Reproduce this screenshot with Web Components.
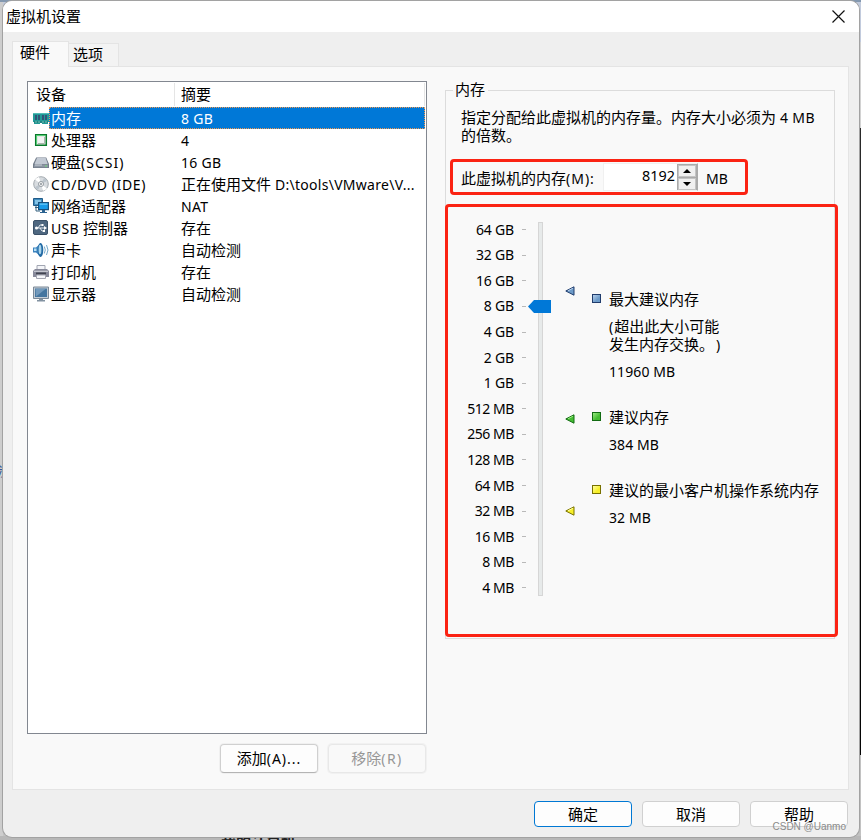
<!DOCTYPE html>
<html lang="zh-CN">
<head>
<meta charset="utf-8">
<title>虚拟机设置</title>
<style>
html,body{margin:0;height:100%;overflow:hidden}
body{font:15px/18px "Noto Sans CJK SC",sans-serif;color:#000;background:#c4c4c4;text-spacing-trim:space-all}
</style>
</head>
<body>
<vm-desktop><vm-window></vm-window></vm-desktop>
<script>
const define=(name,html)=>customElements.define(name,class extends HTMLElement{
  connectedCallback(){
    if(this.shadowRoot)return;
    this.attachShadow({mode:'open'}).innerHTML=typeof html==='function'?html(this):html;
  }
});

// Text with Latin runs set slightly smaller than the Chinese ones.
define('ui-text',el=>{
  const ls=el.getAttribute('ls');
  const runs=el.getAttribute('value').split(/([\x20-\x7e]+)/).filter(Boolean)
    .map(r=>/^[\x20-\x7e]+$/.test(r)?`<span class="l">${r}</span>`:`<span>${r}</span>`).join('');
  return `<style>:host{display:block;white-space:pre;height:18px;line-height:18px}
  span{line-height:18px}.l{font-family:"Noto Sans",sans-serif;font-size:var(--latin,14px);letter-spacing:${ls||0}px;margin-left:var(--gap,0)}</style>${runs}`;
});

define('ui-button',`<style>
:host{display:flex;box-sizing:border-box;width:98px;height:var(--h,26px);align-items:center;justify-content:center;background:#fdfdfd;border:1px solid #d0d0d0;border-radius:4px}
:host([primary]){border-color:#0078d4}
:host([raised]){border-bottom-color:#b4b4b4;box-shadow:0 0 0 1px #f0f0f0}
:host([disabled]){color:#969696;border-color:#e8e8e8;background:#f9f9f9;box-shadow:0 0 0 1px #f1f1f1}
</style><slot></slot>`);

const icons={
memory:`<path d="M0 3h16v9h-1v2h-6v-1H7v1H1v-2H0z" fill="#239a97"/><path d="M0 3h16v1H0z" fill="#54bcb6"/><path d="M2 5h2v5H2zM5 5h2v5H5zM9 5h2v5H9zM12 5h2v5h-2z" fill="#315477"/><path d="M1 12h14" stroke="#1b7070"/><path d="M3 11v2M6 11v2M10 11v2M13 11v2" stroke="#79c6b7"/>`,
cpu:`<path d="M2.7 2.7h10.6v10.6H2.7z" fill="#e2e8e2" stroke="#087a2b" stroke-width="1.5"/><path d="M3.5 12.5v-9h9" fill="none" stroke="#55ce76"/><path d="M5 5h6v6H5z" fill="#f3f3f4"/><path d="M5 11.5h6.5V5" fill="none" stroke="#abb4ad"/>`,
disk:`<path d="M3.2 3.5h10L16 10v4H0v-4z" fill="#737d8b"/><path d="M4 4h8.7l2 6H1.5z" fill="#c3cad4"/><path d="M1 10.5h14v2.8H1z" fill="#8d97a4"/><path d="M2 11h7" stroke="#cdd3da"/><path d="M12 12h2" stroke="#70e079"/>`,
cd:`<circle cx="8" cy="8" r="7.3" fill="#d8dce0" stroke="#a3aaaf"/><path d="M8 8L2 3.5A7 7 0 0 1 6 1zM8 8l6 4.5a7 7 0 0 1-4 2.2z" fill="#fff"/><path d="M8 8l3-6a7 7 0 0 1 3 3zM8 8l-3 6a7 7 0 0 1-3-3z" fill="#bcc5cd"/><circle cx="8" cy="8" r="2.5" fill="#f6f6f6" stroke="#969da3"/><circle cx="8" cy="8" r="1" fill="#8a9299"/>`,
net:`<path d="M.5.5h9v7h-9z" fill="#408bbd" stroke="#205b88"/><path d="M2 2h6v4H2z" fill="#84c3e6"/><path d="M3 8v5h4M2 9.5h4" stroke="#34617f" fill="none"/><path d="M5.6 4.6h9.8v7H5.6z" fill="#189be9" stroke="#17517e" stroke-width="1.2"/><path d="M6.6 5.6h7.8v1.2H6.6z" fill="#67cafa"/><path d="M9 12h3v2h2v1H7v-1h2z" fill="#2b6290"/>`,
usb:`<rect x=".5" y=".5" width="14" height="14" rx="1.5" fill="#4e6780" stroke="#3b5168"/><path d="M2.5 8H12M5 8l2-3h2M7 8l2 3h2" fill="none" stroke="#e4eaf0"/><circle cx="3.5" cy="8" r="1.5" fill="#fff"/><path d="M11 6l3 2-3 2zM8.5 4h2v2h-2zM10 10h2v2h-2z" fill="#fff"/>`,
sound:`<path d="M0 5.5h3L8 1v14l-5-4.5H0z" fill="#3b82bd"/><path d="M1 6.5h2.5V9H1z" fill="#b8dff4"/><ellipse cx="7.5" cy="8" rx="2.8" ry="7" fill="#236ba5"/><ellipse cx="7" cy="7.5" rx="1.4" ry="4.8" fill="#a8d4ec"/><path d="M11.3 4.5q2 3.5 0 7M13.5 3q3 5 0 10" fill="none" stroke="#74a7c8"/>`,
printer:`<path d="M4 1.5h8V6H4z" fill="#f4f5f8" stroke="#a2a6b2"/><path d="M2 5h12l2 2v6H0V7z" fill="#888a9b"/><path d="M1 6.7h14V8H1z" fill="#c5c7d0"/><path d="M3 8.5h10v2H3z" fill="#414451"/><path d="M3.5 11h9v3.5h-9z" fill="#f5f6fa" stroke="#a4a6b1"/>`,
display:`<path d="M.5 1h15v11.5H.5z" fill="#c4cdd6" stroke="#7b8997"/><path d="M2 2.5h12V11H2z" fill="#44759f"/><path d="M2.5 3h10L3 10.5z" fill="#7299bb"/><path d="M6 13h4v1h2v1.5H4V14h2z" fill="#8292a1"/>`
};
define('device-icon',el=>`<style>:host{display:block;width:16px;height:16px}svg{display:block}</style><svg width="16" height="16" viewBox="0 0 16 16">${icons[el.getAttribute('name')]}</svg>`);

define('device-row',el=>`<style>
:host{display:grid;grid-template-columns:16px 132px 1fr;height:22px;padding-left:5px;margin-right:1px;align-items:center}
.body{display:grid;grid-template-columns:130px 1fr;grid-column:2/4;height:22px;box-sizing:border-box;border:1px solid transparent;align-items:center;padding-left:1px}
:host([selected]) .body{background:#0078d7;color:#fff;border:1px dotted #f09850}
</style><device-icon name="${el.getAttribute('icon')}"></device-icon><div class="body"><ui-text value="${el.getAttribute('label')}" ls="${el.getAttribute('ls1')}"></ui-text><ui-text value="${el.getAttribute('summary')}" ls="${el.getAttribute('ls2')}"></ui-text></div>`);

const devices=[['memory','内存','8 GB',0,.3],['cpu','处理器','4',0,0],['disk','硬盘(SCSI)','16 GB',1,.3],['cd','CD/DVD (IDE)','正在使用文件 D:\\tools\\VMware\\V...',.6,.28],['net','网络适配器','NAT',0,.3],['usb','USB 控制器','存在',.3,0],['sound','声卡','自动检测',0,0],['printer','打印机','存在',0,0],['display','显示器','自动检测',0,0]];
define('device-list',`<style>
:host{display:block;box-sizing:border-box;width:400px;height:653px;background:#fff;border:1px solid #828790}
.head{display:grid;grid-template-columns:147px 1fr;height:25px;align-items:center;margin-right:1px}
.head div{height:23px;border-right:1px solid #e5e5e5;padding:2px 0 0 8px;box-sizing:border-box}
.head div:last-child{padding-left:6px}
</style><div class="head"><div><ui-text value="设备"></ui-text></div><div><ui-text value="摘要"></ui-text></div></div>
${devices.map((d,i)=>`<device-row ${i?'':'selected'} icon="${d[0]}" label="${d[1]}" summary="${d[2]}" ls1="${d[3]}" ls2="${d[4]}"></device-row>`).join('')}`);

define('memory-spinner',`<style>
:host{display:flex;height:28px;align-items:center}
.label{width:142px;padding-top:1px}
.field{display:flex;width:95px;height:28px;background:#fff;box-sizing:border-box;border:1px solid #f0f0f0;border-right-color:#aaa}
.field ui-text{flex:1;text-align:right;padding:2px 2px 0 0;--latin:14.4px}
.btns{width:20px;display:grid;grid-template-rows:1fr 1fr;gap:1px;background:#aaa;padding:1px 1px 0 1px;box-sizing:border-box}
.btns b{display:flex;align-items:center;justify-content:center;background:#f0f0f0;border:1px solid #c4c4c4}
.unit{margin-left:8px;padding-top:1px}
</style><ui-text class="label" value="此虚拟机的内存(M):" ls="1"></ui-text><div class="field"><ui-text value="8192"></ui-text><div class="btns"><b><svg width="8" height="4"><path d="M0 4L4 0l4 4z"/></svg></b><b><svg width="8" height="4"><path d="M0 0h8L4 4z"/></svg></b></div></div><ui-text class="unit" value="MB"></ui-text>`);

const levels=['64 GB','32 GB','16 GB','8 GB','4 GB','2 GB','1 GB','512 MB','256 MB','128 MB','64 MB','32 MB','16 MB','8 MB','4 MB'];
const tones={blue:['#6d9bc9','#b8d0ea','#203c6c'],green:['#45bd33','#9bea83','#126b12'],yellow:['#f7ef28','#ffffa5','#777000']};
define('level-arrow',el=>{const [a,b,c]=tones[el.getAttribute('tone')];return `<style>:host{display:block;width:10px;height:10px}svg{display:block}</style><svg width="10" height="10"><path d="M.8 5L9 .8v8.4z" fill="${a}" stroke="${c}"/><path d="M3 4.8L8 2.2" stroke="${b}"/></svg>`});
define('level-swatch',el=>{const [a,b,c]=tones[el.getAttribute('tone')];return `<style>:host{display:block;box-sizing:border-box;width:9px;height:9px;border:1px solid ${c};background:linear-gradient(135deg,${b},${a} 65%)}</style>`});
define('memory-slider',`<style>
:host{display:grid;grid-template-columns:68px 12px 27px;height:384px}
.labels,.ticks{display:grid;grid-template-rows:repeat(15,1fr);height:383.6px;align-items:center}
.labels{text-align:right;margin-top:-1px}.ticks{justify-content:end}
.ticks i{width:4px;height:1px;background:#b9b9b9}
.rail{position:relative}
.track{box-sizing:border-box;width:5px;height:374px;margin:5px 0 0 12px;background:#e7eaea;border:1px solid #d6d6d6}
.thumb{position:absolute;left:2px;top:83px;width:23px;height:13px;background:#0078d7;clip-path:polygon(0 50%,6px 0,100% 0,100% 100%,6px 100%)}
</style><div class="labels">${levels.map(t=>`<ui-text value="${t}" ls="${t.includes('M')?-.45:-.2}"></ui-text>`).join('')}</div><div class="ticks">${levels.map(()=>'<i></i>').join('')}</div><div class="rail"><div class="track"></div><div class="thumb"></div></div>`);

define('memory-legend',`<style>
:host{display:grid;grid-template-columns:27px 1fr}
.a1{margin-top:69px}.a2{margin-top:118px}.a3{margin-top:82px}
.items{padding-top:73px}
section{display:grid;grid-template-columns:17px 1fr}
section+section{margin-top:28px}
level-swatch{margin-top:4px}
.v{margin-top:9px}
.close{--gap:2px}
</style><div><level-arrow class="a1" tone="blue"></level-arrow><level-arrow class="a2" tone="green"></level-arrow><level-arrow class="a3" tone="yellow"></level-arrow></div>
<div class="items">
<section><level-swatch tone="blue"></level-swatch><div><ui-text value="最大建议内存"></ui-text><ui-text class="v" value="(超出此大小可能" ls="1"></ui-text><ui-text class="close" value="发生内存交换。)"></ui-text><ui-text class="v" value="11960 MB" ls="0.1"></ui-text></div></section>
<section><level-swatch tone="green"></level-swatch><div><ui-text value="建议内存"></ui-text><ui-text class="v" value="384 MB" ls="0.1"></ui-text></div></section>
<section><level-swatch tone="yellow"></level-swatch><div><ui-text value="建议的最小客户机操作系统内存"></ui-text><ui-text class="v" value="32 MB" ls="0.1"></ui-text></div></section>
</div>`);

define('memory-group',`<style>
:host{display:block;position:relative;box-sizing:border-box;width:390px;height:549px;border:1px solid #dcdcdc}
.title{width:max-content;margin:-11px 0 0 7px;padding:0 3px 0 2px;background:#f9f9f9}
.desc{margin:10px 0 0 15px}
memory-spinner{margin:19px 0 0 15px}
.levels{display:grid;grid-template-columns:107px 1fr;margin-top:26px}
.levels memory-legend{margin-left:12px}
.mark{position:absolute;box-sizing:border-box;border:3px solid #fb2313;border-radius:4px}
.m1{left:4px;top:68px;width:298px;height:36px}
.m2{left:-1px;top:113px;width:393px;height:433px}
</style><ui-text class="title" value="内存"></ui-text><div class="desc"><ui-text value="指定分配给此虚拟机的内存量。内存大小必须为 4 MB" ls="0.35"></ui-text><ui-text value="的倍数。"></ui-text></div><memory-spinner></memory-spinner>
<div class="levels"><memory-slider></memory-slider><memory-legend></memory-legend></div><div class="mark m1"></div><div class="mark m2"></div>`);

define('vm-window',`<style>
:host{display:flex;flex-direction:column;position:relative;box-sizing:border-box;width:856px;height:836px;background:#efefef;border-radius:9px;overflow:hidden;box-shadow:0 0 0 1px #a2a2a2}
header{display:flex;justify-content:space-between;height:31px;background:#fff;padding:0 14px 1px 3px;box-sizing:border-box;align-items:center}
header svg{display:block}
nav{display:flex;align-items:flex-end;height:34px;padding-left:9px}
.tab{box-sizing:border-box;border:1px solid #e4e4e4;border-bottom:0}
.on{width:57px;height:26px;background:#f9f9f9;padding:1px 0 0 7px;margin-bottom:-1px;position:relative}
.off{width:50px;height:23px;background:#f3f3f3;padding:1px 0 0 4px;border-left:0}
main{display:flex;gap:18px;box-sizing:border-box;width:837px;height:724px;margin-left:9px;background:#f9f9f9;border:1px solid #e4e4e4;padding:14px 0 0 14px}
memory-group{margin-top:9px}
.actions{display:flex;gap:10px;justify-content:flex-end;margin:10px 1px 0 0;--h:29px}
.actions ui-text{margin-top:-2px}
footer{display:flex;gap:10px;justify-content:flex-end;padding:11px 11px 0 0;position:relative}
.wm{position:absolute;right:13px;top:29px;font:10px/16px "Liberation Sans",sans-serif;color:#8b8b8b}
</style>
<header><ui-text value="虚拟机设置"></ui-text><svg width="13" height="13"><path d="M.5.5l12 12M12.5.5l-12 12" stroke="#111" stroke-width="1.2"/></svg></header>
<nav><div class="tab on"><ui-text value="硬件"></ui-text></div><div class="tab off"><ui-text value="选项"></ui-text></div></nav>
<main><div><device-list></device-list><div class="actions"><ui-button raised><ui-text value="添加(A)..." ls="1"></ui-text></ui-button><ui-button disabled><ui-text value="移除(R)" ls="1.4"></ui-text></ui-button></div></div><memory-group></memory-group></main>
<footer><ui-button primary><ui-text value="确定"></ui-text></ui-button><ui-button><ui-text value="取消"></ui-text></ui-button><ui-button><ui-text value="帮助"></ui-text></ui-button><span class="wm">CSDN @Uanmo</span></footer>`);

// Slivers of the desktop that stay visible round the dialog.
define('vm-desktop',`<style>
:host{display:block;position:relative;box-sizing:border-box;width:861px;height:840px;overflow:hidden;padding:1px 0 0 3px;
background:linear-gradient(90deg,#cdcdcd 3px,transparent 3px),linear-gradient(#8398b0 2px,#c2cbdd 2px 42px,#d2d2d2 42px 128px,#292929 128px 410px,#050505 410px 755px,#c2c2c2 755px)}
.under{position:absolute;left:0;top:836px;width:861px;height:4px;background:#b7b7b7;overflow:hidden}
.under ui-text{margin:-3px 0 0 221px;font-weight:700;color:#222}
.edge{position:absolute;left:0;top:465px;width:2px;height:13px;overflow:hidden;color:#345b96}
.edge ui-text{margin:-2px 0 0 -12px}
.top{position:absolute;left:0;top:0;width:861px;height:2px;background:#8398b0}
</style><div class="top"></div><div class="under"><ui-text value="我的计算机"></ui-text></div><div class="edge"><ui-text value="载"></ui-text></div><slot></slot>`);
</script>
</body>
</html>
